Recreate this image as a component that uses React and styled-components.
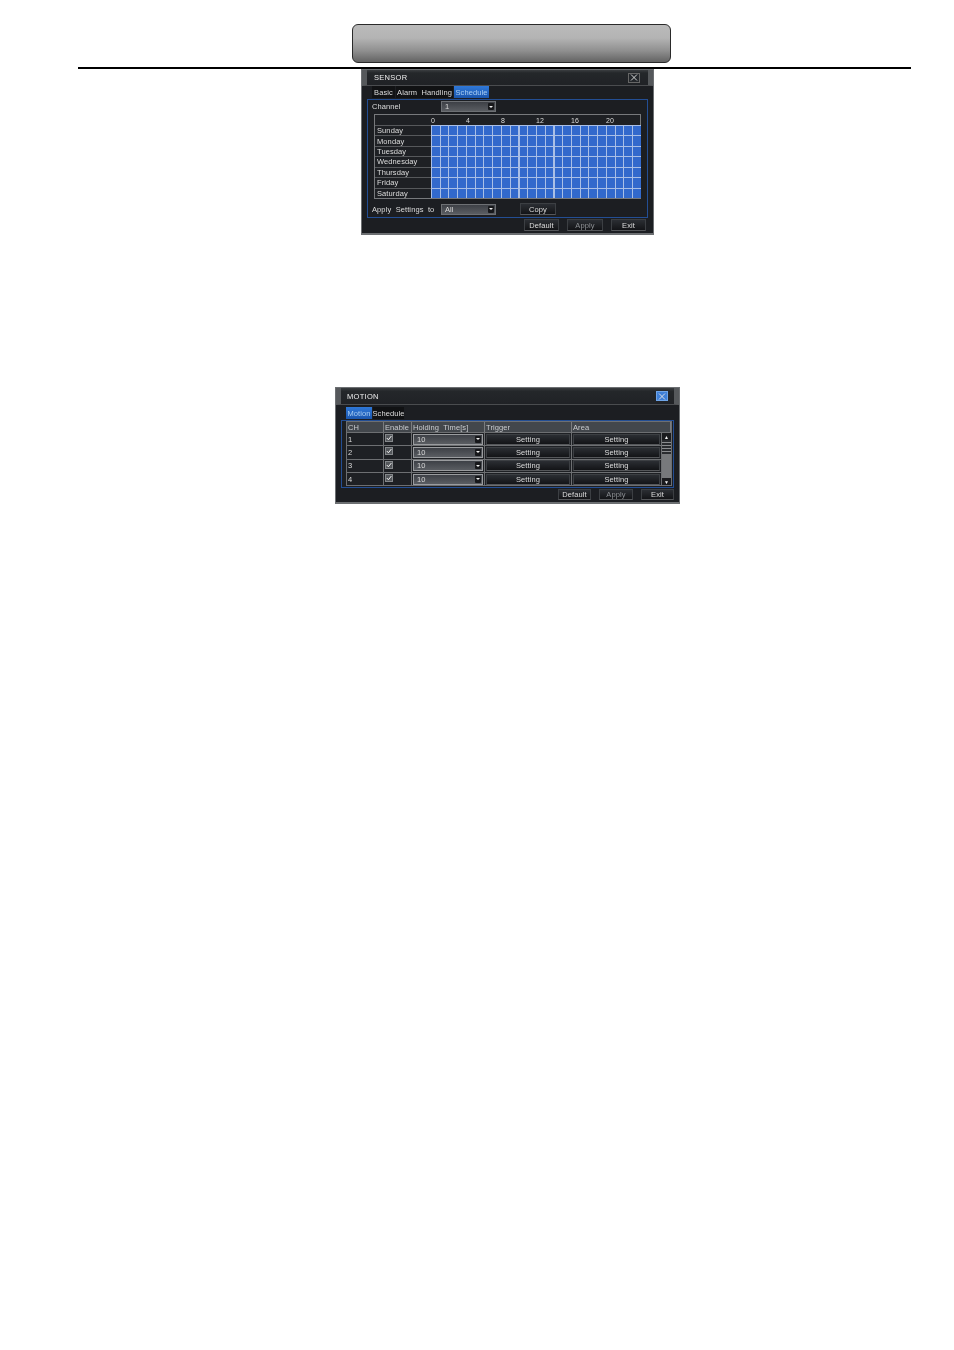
import React from 'react';
import styled, { createGlobalStyle } from 'styled-components';

const GlobalStyle = createGlobalStyle`
  html, body { margin: 0; padding: 0; background: #fff; }
  body { font-family: "Liberation Sans", Arial, sans-serif; }
`;

const Page = styled.div`
  width: 954px;
  height: 1350px;
  display: flex;
  flex-direction: column;
  align-items: center;
  overflow: hidden;
  background: #fff;
`;

const Plaque = styled.div`
  box-sizing: border-box;
  width: 319px;
  height: 39px;
  margin: 24px 0 0 69px;
  border: 1.5px solid #2a2a2a;
  border-radius: 6px;
  background: linear-gradient(#bababa 0%, #b4b4b4 35%, #8f8f8f 70%, #636363 100%);
`;

const Rule = styled.div`
  width: 833px;
  height: 2px;
  margin: 4px 0 0 35px;
  background: #000;
`;

const Dialog = styled.div`
  box-sizing: border-box;
  display: flex;
  flex-direction: column;
  width: ${p => p.$w}px;
  height: ${p => p.$h}px;
  margin: ${p => p.$m};
  background: #1c1e22;
  border: solid #6c6f72;
  border-width: 1px 1px 2px 1px;
  color: #dcdcdc;
  font-size: 7.5px;
  letter-spacing: 0.1px;
  filter: blur(0.35px);
`;

const TitleBar = styled.div`
  box-sizing: border-box;
  display: flex;
  align-items: center;
  justify-content: space-between;
  height: ${p => p.$h}px;
  flex: none;
  padding: 0 ${p => p.$pr}px 0 ${p => p.$pl}px;
  background: linear-gradient(#3a3d40 0, #24272a 20%, #202226 100%);
  border-left: 5px solid #55585b;
  border-right: 5px solid #55585b;
  border-bottom: 1px solid #4a4c4f;
  font-size: 7.5px;
  letter-spacing: 0.3px;
  color: #eee;
`;

const CloseBtn = styled.div`
  box-sizing: border-box;
  display: flex;
  align-items: center;
  justify-content: center;
  width: 12px;
  height: 10px;
  background: ${p => (p.$blue ? '#3f7fd6' : '#24272b')};
  border: 1px solid ${p => (p.$blue ? '#6fa5e8' : '#666')};
`;

const TabRow = styled.div`
  display: flex;
  flex: none;
  height: 12px;
  margin: ${p => p.$m};
`;

const Tab = styled.div`
  box-sizing: border-box;
  display: flex;
  align-items: center;
  justify-content: center;
  width: ${p => p.$w}px;
  height: 12px;
  margin-right: 1px;
  background: ${p => (p.$active ? 'linear-gradient(#2f78d8, #1b56ad)' : '#111214')};
  color: ${p => (p.$active ? '#a9cdf2' : '#dcdcdc')};
  white-space: pre;
  font-size: 7.5px;
`;

const Panel = styled.div`
  box-sizing: border-box;
  display: flex;
  flex-direction: column;
  flex: none;
  width: ${p => p.$w}px;
  height: ${p => p.$h}px;
  margin: ${p => p.$m};
  padding: ${p => p.$p};
  border: 1px solid #234e94;
`;

const FieldRow = styled.div`
  display: flex;
  align-items: center;
  height: ${p => p.$h}px;
  flex: none;
  margin: ${p => p.$m || 0};
`;

const FieldLabel = styled.div`
  width: ${p => p.$w}px;
  white-space: pre;
`;

const Select = styled.div`
  box-sizing: border-box;
  display: flex;
  align-items: center;
  justify-content: space-between;
  width: ${p => p.$w}px;
  height: ${p => p.$h || 11}px;
  padding: 0 1px 0 3px;
  background: linear-gradient(#3d4046, #5a5d62);
  border: 1px solid ${p => (p.$light ? '#9a9c9f' : '#6d7074')};
  color: #d8d8d8;
  flex: none;
`;

const Caret = styled.span`
  display: flex;
  align-items: center;
  justify-content: center;
  width: 6px;
  height: 7px;
  background: #17181b;
  border-radius: 1px;
  &::after {
    content: '';
    border: 2px solid transparent;
    border-top: 2px solid #eee;
    border-bottom: 0;
  }
`;

const Button = styled.div`
  box-sizing: border-box;
  display: flex;
  align-items: center;
  justify-content: center;
  flex: none;
  width: ${p => p.$w}px;
  height: ${p => p.$h || 12}px;
  margin-left: ${p => p.$ml || 0}px;
  background: linear-gradient(#2b2e33, #131417);
  border: 1px solid #3c3f43;
  border-bottom-color: #55575a;
  color: ${p => (p.$dim ? '#8d9094' : '#dcdcdc')};
`;

const Schedule = styled.div`
  box-sizing: border-box;
  display: grid;
  grid-template-columns: 56px 1fr;
  grid-template-rows: 10px repeat(7, 1fr);
  width: 267px;
  height: 85px;
  flex: none;
  margin-top: 2px;
  border: 1px solid #77797c;
  background: #1e2024;
`;

const HourScale = styled.div`
  grid-column: 2;
  display: grid;
  grid-template-columns: repeat(6, 35px);
  align-items: center;
  font-size: 7px;
`;

const HourLabel = styled.span`
  padding-left: 0;
`;

const DayLabel = styled.div`
  display: flex;
  align-items: center;
  padding-left: 2px;
  border-top: 1px solid #56585b;
  grid-column: 1;
`;

// the 24 hour slots of one day, a line every 8.75px
const DayCells = styled.div`
  grid-column: 2;
  border-top: 1px solid #a9bfe6;
  background: repeating-linear-gradient(90deg, #a9bfe6 0 1px, #3269cc 1px 8.75px);
`;

const Footer = styled.div`
  display: flex;
  justify-content: flex-end;
  flex: none;
  margin: ${p => p.$m};
`;

const Table = styled.div`
  box-sizing: border-box;
  display: grid;
  grid-template-columns: ${p => p.$cols};
  width: 326px;
  border: 1px solid #6d6f72;
`;

const HeadCell = styled.div`
  box-sizing: border-box;
  display: flex;
  align-items: center;
  height: 10px;
  padding-left: 1px;
  background: #43474c;
  border-right: 1px solid #7a7c7f;
  color: #c9cbce;
  white-space: pre;
`;

const BodyCell = styled.div`
  box-sizing: border-box;
  display: flex;
  align-items: center;
  justify-content: ${p => (p.$center ? 'center' : 'flex-start')};
  height: 13.3px;
  padding-left: ${p => (p.$center ? 0 : 1)}px;
  border-top: 1px solid #6d6f72;
  border-right: 1px solid #6d6f72;
  background: #1e2024;
`;

const Check = styled.div`
  box-sizing: border-box;
  display: flex;
  align-items: center;
  justify-content: center;
  width: 8px;
  height: 8px;
  background: #54575b;
  border: 1px solid #85888b;
  margin-top: -2px;
`;

const TableBody = styled.div`
  display: grid;
  grid-column: 1 / -1;
  grid-template-columns: 37px 28px 73px 87px 90px 9px;
`;

const ScrollColumn = styled.div`
  display: flex;
  flex-direction: column;
  grid-column: 6;
  grid-row: 1 / span 4;
  background: #77797c;
  border-top: 1px solid #6d6f72;
`;

const ScrollEnd = styled.div`
  display: flex;
  align-items: center;
  justify-content: center;
  height: 7px;
  background: #1a1b1e;
  color: #eee;
  font-size: 5px;
  flex: none;
`;

const ScrollThumb = styled.div`
  height: 14px;
  background: repeating-linear-gradient(#2a2c30 0 2px, #8b8d90 2px 3px);
  flex: none;
`;

const ScrollTrack = styled.div`
  flex: 1;
`;

const close = (
  <svg width="8" height="7" viewBox="0 0 8 7">
    <path d="M1 .5 L7 6.5 M7 .5 L1 6.5" stroke="#e6e6e6" strokeWidth="0.9" fill="none" />
  </svg>
);

const tick = (
  <svg width="6" height="6" viewBox="0 0 6 6">
    <path d="M.8 3 L2.4 4.8 L5.4 1" stroke="#eee" strokeWidth="1" fill="none" />
  </svg>
);

const days = ['Sunday', 'Monday', 'Tuesday', 'Wednesday', 'Thursday', 'Friday', 'Saturday'];
const hours = [0, 4, 8, 12, 16, 20];
const channels = [1, 2, 3, 4];

function SensorDialog() {
  return (
    <Dialog $w={293} $h={166} $m="0 0 0 61px">
      <TitleBar $h={16} $pl={7} $pr={8}>
        SENSOR
        <CloseBtn>{close}</CloseBtn>
      </TitleBar>
      <TabRow $m="0 0 0 10px">
        <Tab $w={23}>Basic</Tab>
        <Tab $w={57}>{'Alarm  Handling'}</Tab>
        <Tab $w={35} $active>Schedule</Tab>
      </TabRow>
      <Panel $w={281} $h={119} $m="1px 0 0 5px" $p="1px 0 0 6px">
        <FieldRow $h={11} $m="0 0 0 -2px">
          <FieldLabel $w={69}>Channel</FieldLabel>
          <Select $w={55}>1<Caret /></Select>
        </FieldRow>
        <Schedule>
          <HourScale>
            {hours.map(h => <HourLabel key={h}>{h}</HourLabel>)}
          </HourScale>
          {days.map(d => (
            <React.Fragment key={d}>
              <DayLabel>{d}</DayLabel>
              <DayCells />
            </React.Fragment>
          ))}
        </Schedule>
        <FieldRow $h={12} $m="4px 0 0 -2px">
          <FieldLabel $w={69}>{'Apply  Settings  to'}</FieldLabel>
          <Select $w={55}>All<Caret /></Select>
          <Button $w={36} $h={12} $ml={24}>Copy</Button>
        </FieldRow>
      </Panel>
      <Footer $m="1px 7px 0 0">
        <Button $w={35} $h={12}>Default</Button>
        <Button $w={36} $h={12} $ml={8} $dim>Apply</Button>
        <Button $w={35} $h={12} $ml={8}>Exit</Button>
      </Footer>
    </Dialog>
  );
}

function MotionDialog() {
  return (
    <Dialog $w={345} $h={117} $m="152px 0 0 61px">
      <TitleBar $h={17} $pl={6} $pr={6}>
        MOTION
        <CloseBtn $blue>{close}</CloseBtn>
      </TitleBar>
      <TabRow $m="2px 0 0 10px">
        <Tab $w={26} $active>Motion</Tab>
        <Tab $w={31}>Schedule</Tab>
      </TabRow>
      <Panel $w={333} $h={68} $m="1px 0 0 5px" $p="0 0 0 4px">
        <Table $cols="37px 28px 73px 87px 1fr">
          <HeadCell>CH</HeadCell>
          <HeadCell>Enable</HeadCell>
          <HeadCell>{'Holding  Time[s]'}</HeadCell>
          <HeadCell>Trigger</HeadCell>
          <HeadCell>Area</HeadCell>
          <TableBody>
            {channels.map(c => (
              <React.Fragment key={c}>
                <BodyCell>{c}</BodyCell>
                <BodyCell><Check>{tick}</Check></BodyCell>
                <BodyCell><Select $w={70} $h={11} $light>10<Caret /></Select></BodyCell>
                <BodyCell $center><Button $w={84} $h={11}>Setting</Button></BodyCell>
                <BodyCell $center><Button $w={87} $h={11}>Setting</Button></BodyCell>
              </React.Fragment>
            ))}
            <ScrollColumn>
              <ScrollEnd>▲</ScrollEnd>
              <ScrollThumb />
              <ScrollTrack />
              <ScrollEnd>▼</ScrollEnd>
            </ScrollColumn>
          </TableBody>
        </Table>
      </Panel>
      <Footer $m="1px 5px 0 0">
        <Button $w={33} $h={11}>Default</Button>
        <Button $w={34} $h={11} $ml={8} $dim>Apply</Button>
        <Button $w={33} $h={11} $ml={8}>Exit</Button>
      </Footer>
    </Dialog>
  );
}

export default function App() {
  return (
    <Page>
      <GlobalStyle />
      <Plaque />
      <Rule />
      <SensorDialog />
      <MotionDialog />
    </Page>
  );
}
